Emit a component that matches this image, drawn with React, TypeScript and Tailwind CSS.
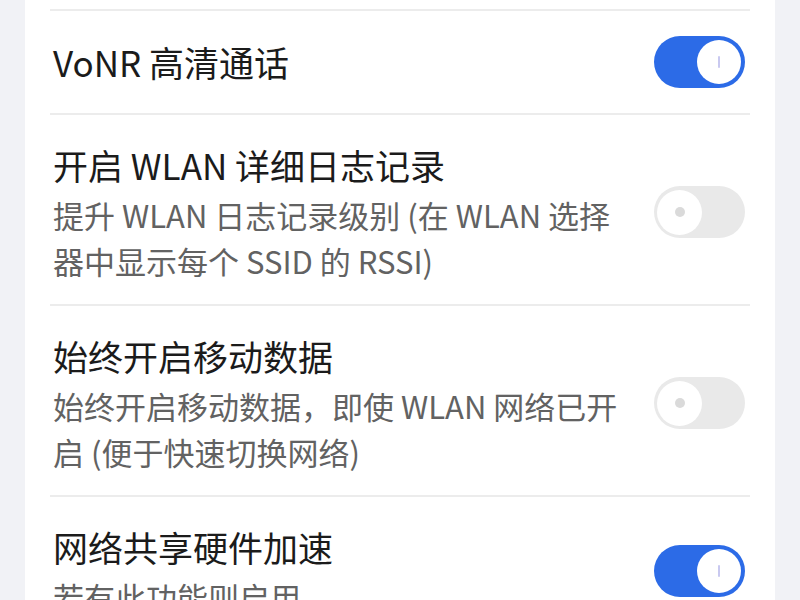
import React from "react";

type Row = {
  title: string;
  lines?: string[];
  on: boolean;
};

const rows: Row[] = [
  { title: "VoNR 高清通话", on: true },
  {
    title: "开启 WLAN 详细日志记录",
    lines: ["提升 WLAN 日志记录级别 (在 WLAN 选择", "器中显示每个 SSID 的 RSSI)"],
    on: false,
  },
  {
    title: "始终开启移动数据",
    lines: ["始终开启移动数据，即使 WLAN 网络已开", "启 (便于快速切换网络)"],
    on: false,
  },
  { title: "网络共享硬件加速", lines: ["若有此功能则启用"], on: true },
];

function Toggle({ on }: { on: boolean }) {
  if (on) {
    return (
      <div className="flex h-[52px] w-[91px] shrink-0 items-center justify-end rounded-full bg-[#2c6be7] pr-[4px]">
        <div className="flex h-[44px] w-[44px] items-center justify-center rounded-full bg-white">
          <div className="h-[12px] w-[2px] rounded-full bg-[#c9c9f0]" />
        </div>
      </div>
    );
  }
  return (
    <div className="flex h-[52px] w-[91px] shrink-0 items-center justify-start rounded-full bg-[#e9e9e9] pl-[3px]">
      <div className="flex h-[45px] w-[45px] items-center justify-center rounded-full bg-white">
        <div className="h-[10px] w-[10px] rounded-full bg-[#dadada]" />
      </div>
    </div>
  );
}

export default function App() {
  return (
    <div
      className="flex h-[600px] w-[800px] overflow-hidden bg-[#f1f2f6] px-[25px]"
      style={{ fontFamily: '"Noto Sans CJK SC", "Noto Sans", sans-serif' }}
    >
      <div className="flex flex-1 flex-col bg-white px-[25px] pt-[9px]">
        {rows.map((row, i) => (
          <div key={i} className="border-t-2 border-[#ececec]">
            <div
              className={
                row.lines
                  ? "flex items-center justify-between pb-[20px] pl-[3px] pr-[5px] pt-[25px]"
                  : "flex min-h-[102px] items-center justify-between pl-[3px] pr-[5px]"
              }
            >
              <div className="flex flex-col">
                <div className="text-[35px] leading-[50px] text-[#1b1b1b]">{row.title}</div>
                {row.lines && (
                  <div className="mt-[2px] flex flex-col">
                    {row.lines.map((l, j) => (
                      <div key={j} className="text-[31px] leading-[46px] text-[#626262]">
                        {l}
                      </div>
                    ))}
                  </div>
                )}
              </div>
              <Toggle on={row.on} />
            </div>
          </div>
        ))}
      </div>
    </div>
  );
}
